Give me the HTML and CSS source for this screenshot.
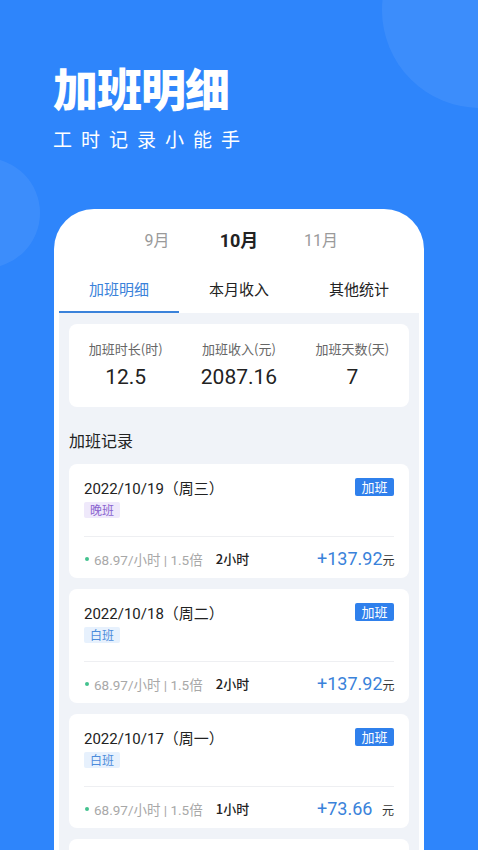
FILE: index.html
```html
<!DOCTYPE html>
<html lang="zh-CN">
<head>
<meta charset="utf-8">
<title>加班明细</title>
<link rel="stylesheet" href="styles.css">
</head>
<body>
<div class="screen">
  <div class="bubble bubble-tr"></div>
  <div class="bubble bubble-l"></div>
  <header class="hero">
    <h1 class="hero-title">加班明细</h1>
    <p class="hero-sub">工时记录小能手</p>
  </header>
  <section class="phone">
    <div class="months">
      <span class="month">9月</span>
      <span class="month month-active">10月</span>
      <span class="month">11月</span>
    </div>
    <nav class="tabs">
      <span class="tab tab-active">加班明细</span>
      <span class="tab">本月收入</span>
      <span class="tab">其他统计</span>
    </nav>
    <div class="content">
      <div class="stats">
        <div class="stat"><div class="stat-label">加班时长(时)</div><div class="stat-value">12.5</div></div>
        <div class="stat"><div class="stat-label">加班收入(元)</div><div class="stat-value">2087.16</div></div>
        <div class="stat"><div class="stat-label">加班天数(天)</div><div class="stat-value">7</div></div>
      </div>
      <h2 class="section-title">加班记录</h2>
      <div class="records">
        <div class="record">
          <div class="record-head"><span class="record-date">2022/10/19（周三）</span><span class="badge">加班</span></div>
          <span class="shift shift-night">晚班</span>
          <div class="divider"></div>
          <div class="record-foot">
            <span class="dot"></span><span class="rate">68.97/小时 | 1.5倍</span><span class="hours">2小时</span>
            <span class="amount"><span class="amount-num">+137.92</span><span class="yuan">元</span></span>
          </div>
        </div>
        <div class="record">
          <div class="record-head"><span class="record-date">2022/10/18（周二）</span><span class="badge">加班</span></div>
          <span class="shift shift-day">白班</span>
          <div class="divider"></div>
          <div class="record-foot">
            <span class="dot"></span><span class="rate">68.97/小时 | 1.5倍</span><span class="hours">2小时</span>
            <span class="amount"><span class="amount-num">+137.92</span><span class="yuan">元</span></span>
          </div>
        </div>
        <div class="record">
          <div class="record-head"><span class="record-date">2022/10/17（周一）</span><span class="badge">加班</span></div>
          <span class="shift shift-day">白班</span>
          <div class="divider"></div>
          <div class="record-foot">
            <span class="dot"></span><span class="rate">68.97/小时 | 1.5倍</span><span class="hours">1小时</span>
            <span class="amount"><span class="amount-num">+73.66</span><span class="yuan">元</span></span>
          </div>
        </div>
        <div class="record"></div>
      </div>
    </div>
  </section>
</div>
</body>
</html>
```

FILE: styles.css
```css
* { box-sizing: border-box; }
html, body { margin: 0; padding: 0; }
body {
  width: 478px;
  height: 850px;
  overflow: hidden;
  background: #2E85FB;
  font-family: "Noto Sans CJK SC", "Noto Sans", sans-serif;
}
.screen {
  position: relative;
  width: 478px;
  height: 850px;
  overflow: hidden;
}
.bubble {
  position: absolute;
  border-radius: 50%;
  background: rgba(255, 255, 255, 0.07);
}
.bubble-tr { width: 196px; height: 196px; left: 382px; top: -88px; }
.bubble-l { width: 110px; height: 110px; left: -70px; top: 158px; }
.hero {
  position: relative;
  padding: 62px 0 0 53px;
  height: 209px;
}
.hero-title {
  margin: 0;
  font-size: 45px;
  line-height: 52px;
  font-weight: 900;
  color: #fff;
  letter-spacing: -1px;
}
.hero-sub {
  margin: 12px 0 0;
  font-size: 19px;
  line-height: 26px;
  color: #fff;
  letter-spacing: 9px;
}
.phone {
  position: relative;
  margin: 0 54px;
  height: 641px;
  background: #fff;
  border-radius: 40px 40px 0 0;
  padding: 0 5px;
}
.months {
  height: 56px;
  padding-top: 8px;
  display: flex;
  justify-content: center;
  align-items: center;
  gap: 22px;
}
.month {
  width: 60px;
  text-align: center;
  font-size: 16px;
  color: #9a9a9a;
  line-height: 48px;
  font-family: "Roboto", "Noto Sans CJK SC", sans-serif;
}
.month-active {
  font-size: 18px;
  font-weight: 700;
  color: #222;
}
.tabs {
  display: flex;
  height: 48px;
}
.tab {
  flex: 1;
  display: flex;
  align-items: center;
  justify-content: center;
  font-size: 15px;
  color: #222;
  border-bottom: 2px solid transparent;
}
.tab-active {
  color: #3A82DA;
  border-bottom-color: #3A82DA;
}
.content {
  background: #F0F3F8;
  height: 537px;
  padding: 11px 10px 0;
}
.stats {
  display: flex;
  height: 83px;
  background: #fff;
  border-radius: 8px;
  padding-top: 13px;
}
.stat {
  flex: 1;
  text-align: center;
}
.stat-label {
  font-size: 13px;
  line-height: 24px;
  color: #666;
}
.stat-value {
  font-size: 21px;
  line-height: 32px;
  color: #222;
  font-family: "Roboto", "Noto Sans CJK SC", sans-serif;
  font-weight: 400;
}
.section-title {
  margin: 22px 0 13px;
  font-size: 16px;
  line-height: 22px;
  font-weight: 400;
  color: #222;
}
.records {
  display: flex;
  flex-direction: column;
  gap: 11px;
}
.record {
  height: 114px;
  flex: none;
  background: #fff;
  border-radius: 8px;
  padding: 14px 15px 0;
}
.record-head {
  display: flex;
  justify-content: space-between;
  align-items: center;
  height: 18px;
}
.record-date {
  font-size: 15px;
  color: #222;
  font-family: "Roboto", "Noto Sans CJK SC", sans-serif;
  font-weight: 400;
}
.badge {
  width: 39px;
  height: 18px;
  line-height: 18px;
  text-align: center;
  font-size: 13px;
  color: #fff;
  background: #2F80EC;
  border-radius: 2px;
}
.shift {
  display: inline-block;
  margin-top: 6px;
  width: 36px;
  height: 16px;
  line-height: 16px;
  text-align: center;
  font-size: 12px;
  border-radius: 2px;
  vertical-align: top;
}
.shift-night { background: #EFE9FB; color: #8A63CF; }
.shift-day { background: #E7F1FD; color: #4C8CDB; }
.divider {
  margin-top: 16px;
  height: 1px;
  background: #EEEFF2;
}
.record-foot {
  display: flex;
  align-items: center;
  height: 43px;
}
.dot {
  width: 4px;
  height: 4px;
  border-radius: 50%;
  background: #43C28E;
  margin-left: 1px;
  margin-right: 5px;
}
.rate {
  font-size: 13.5px;
  color: #A8A8A8;
  font-family: "Roboto", "Noto Sans CJK SC", sans-serif;
}
.hours {
  margin-left: 13px;
  font-size: 13px;
  font-weight: 500;
  color: #222;
}
.amount {
  margin-left: auto;
  width: 77px;
  display: flex;
  justify-content: space-between;
  align-items: baseline;
}
.amount-num {
  font-size: 18px;
  color: #3A82DA;
  font-family: "Roboto", "Noto Sans CJK SC", sans-serif;
  font-weight: 400;
}
.yuan {
  font-size: 12px;
  color: #333;
}
```
